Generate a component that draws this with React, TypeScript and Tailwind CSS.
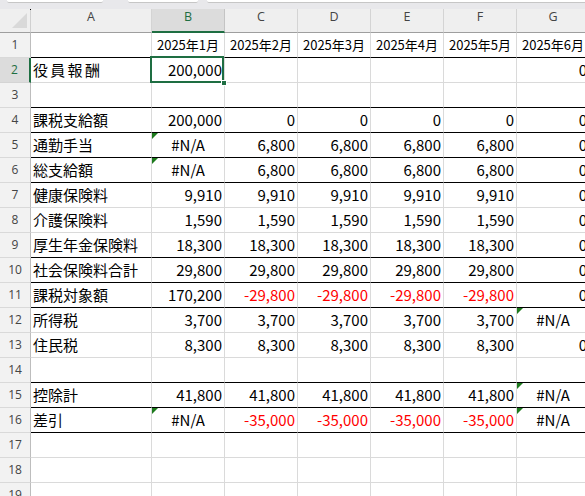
import React from "react";

const COLS = ["A", "B", "C", "D", "E", "F", "G"];
const THICK = new Set([1, 3, 4, 5, 6, 9, 10, 11, 14, 15, 16]);
const TRI = new Set(["B5", "B6", "B16", "G12", "G15", "G16"]);

const DATA: Record<number, string[]> = {
  1: ["", "2025年1月", "2025年2月", "2025年3月", "2025年4月", "2025年5月", "2025年6月"],
  2: ["役員報酬", "200,000", "", "", "", "", "0"],
  4: ["課税支給額", "200,000", "0", "0", "0", "0", "0"],
  5: ["通勤手当", "#N/A", "6,800", "6,800", "6,800", "6,800", "0"],
  6: ["総支給額", "#N/A", "6,800", "6,800", "6,800", "6,800", "0"],
  7: ["健康保険料", "9,910", "9,910", "9,910", "9,910", "9,910", "0"],
  8: ["介護保険料", "1,590", "1,590", "1,590", "1,590", "1,590", "0"],
  9: ["厚生年金保険料", "18,300", "18,300", "18,300", "18,300", "18,300", "0"],
  10: ["社会保険料合計", "29,800", "29,800", "29,800", "29,800", "29,800", "0"],
  11: ["課税対象額", "170,200", "-29,800", "-29,800", "-29,800", "-29,800", "0"],
  12: ["所得税", "3,700", "3,700", "3,700", "3,700", "3,700", "#N/A"],
  13: ["住民税", "8,300", "8,300", "8,300", "8,300", "8,300", "0"],
  15: ["控除計", "41,800", "41,800", "41,800", "41,800", "41,800", "#N/A"],
  16: ["差引", "#N/A", "-35,000", "-35,000", "-35,000", "-35,000", "#N/A"],
};

const ROWS = Array.from({ length: 19 }, (_, i) => i + 1);

function Cell({ row, ci }: { row: number; ci: number }) {
  const col = COLS[ci];
  const v = DATA[row]?.[ci] ?? "";
  const thick = THICK.has(row);
  const isHeader = row === 1;
  const isErr = v === "#N/A";
  const isRed = v.startsWith("-");
  const isLabel = ci === 0;
  const tri = TRI.has(`${col}${row}`);
  const border = thick
    ? "border-r border-b border-r-[#dadada] border-b-black"
    : "border-r border-b border-r-[#dadada] border-b-[#dadada]";
  let align = "justify-end pr-[2px]";
  if (isLabel) align = "justify-start pl-[2px]";
  if (isErr || isHeader) align = "justify-center";
  const text = isHeader
    ? "text-[13px] text-black"
    : isRed
    ? "text-[15px] text-[#ff0000]"
    : "text-[15px] text-black";
  return (
    <div className={`relative flex items-center overflow-visible whitespace-nowrap ${border} ${align}`}>
      {tri && (
        <svg className="absolute left-0 top-0" width="6" height="6" viewBox="0 0 6 6">
          <polygon points="0,0 6,0 0,6" fill="#1d7a1d" />
        </svg>
      )}
      <span
        className={`leading-none pb-[2px] ${text} ${row === 2 && isLabel ? "tracking-[2.3px]" : ""}`}
        style={{ fontFamily: '"Noto Sans CJK JP", "Noto Sans", sans-serif' }}
      >
        {v}
      </span>
    </div>
  );
}

export default function App() {
  return (
    <div className="relative w-[585px] h-[496px] overflow-hidden bg-white">
      {/* top band */}
      <div className="flex h-[9px] bg-[#e8e8eb]">
        <div className="ml-[7px] w-[96px] h-[3px] bg-white border-b border-[#c6c6c6] rounded-b-[2px]" />
        <div className="ml-[25px] w-[70px] h-[3px] bg-white border-b border-[#c6c6c6] rounded-b-[2px]" />
        <div className="ml-[9px] flex-1 h-[3px] bg-white border-b border-[#c6c6c6] rounded-bl-[2px]" />
      </div>

      <div
        className="grid grid-cols-[31px_121px_73px_73px_73px_73px_73px_73px] grid-rows-[24px_repeat(19,25px)] w-[590px]"
        style={{ fontFamily: '"Open Sans", "Noto Sans", sans-serif' }}
      >
        {/* corner */}
        <div className="relative bg-[#efefef] border-r border-b border-r-[#d0d0d0] border-b-[#9e9e9e]">
          <svg className="absolute right-[3px] bottom-[4px]" width="15" height="15" viewBox="0 0 15 15">
            <polygon points="15,0 15,15 0,15" fill="#d9d9d9" />
          </svg>
        </div>
        {COLS.map((c) =>
          c === "B" ? (
            <div
              key={c}
              className="flex justify-center items-start bg-[#dcdcdc] border-r border-b-2 border-r-[#c4c4c4] border-b-[#1e6e42] text-[12.5px] leading-[16px] text-[#1e6e42]"
            >
              {c}
            </div>
          ) : (
            <div
              key={c}
              className="flex justify-center items-start bg-[#efefef] border-r border-b border-r-[#d4d4d4] border-b-[#9e9e9e] text-[12.5px] leading-[16px] text-[#444444]"
            >
              {c}
            </div>
          )
        )}

        {ROWS.map((r) => (
          <React.Fragment key={r}>
            {r === 2 ? (
              <div className="flex items-center justify-center bg-[#dcdcdc] border-r-2 border-b border-r-[#1e6e42] border-b-[#d4d4d4] text-[12px] text-[#1e6e42]">
                {r}
              </div>
            ) : (
              <div className="flex items-center justify-center bg-[#f2f2f2] border-r border-b border-r-[#bdbdbd] border-b-[#d9d9d9] text-[12px] text-[#444444]">
                {r}
              </div>
            )}
            {COLS.map((_, ci) => (
              <Cell key={ci} row={r} ci={ci} />
            ))}
          </React.Fragment>
        ))}
      </div>

      {/* selection on B2 */}
      <div className="absolute left-[150px] top-[56px] w-[74px] h-[27px] border-2 border-[#1e6e42]" />
      <div className="absolute left-[221px] top-[80px] w-[6px] h-[6px] bg-[#1e6e42] border border-white" />
      {/* cursor speck */}
      <div className="absolute left-[30px] top-[9px] w-[1px] h-[1px] bg-black" />
    </div>
  );
}
